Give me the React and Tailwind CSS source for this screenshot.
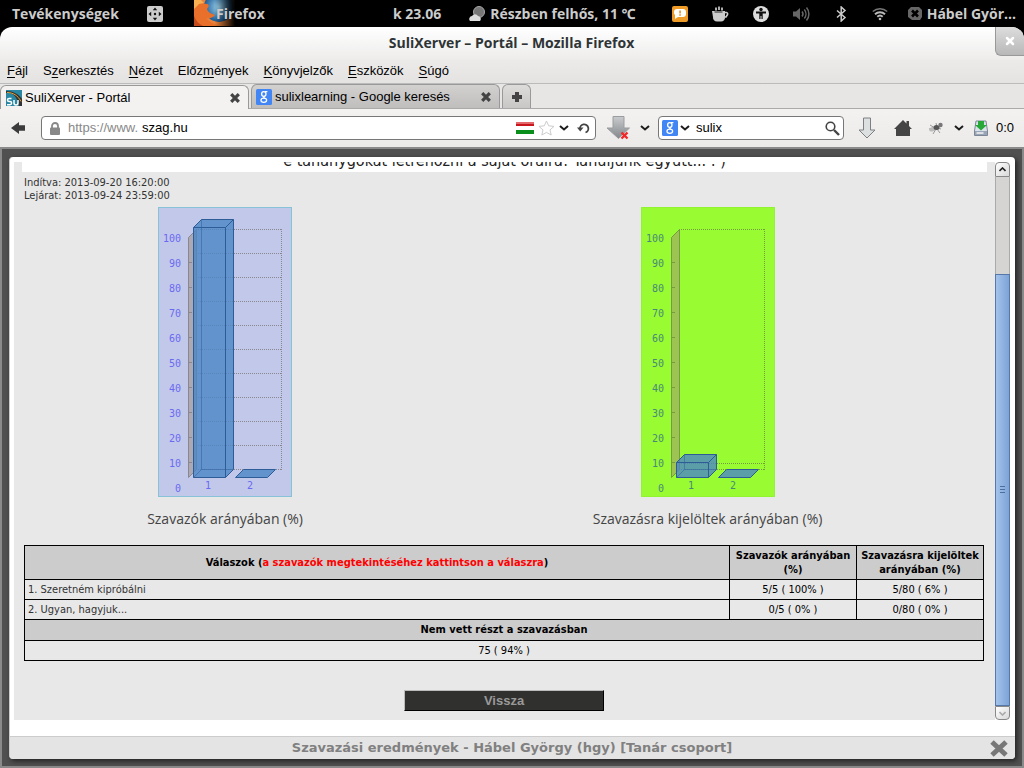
import { X } from "lucide-react"

const menus = [
  ["", "F", "ájl"],
  ["S", "z", "erkesztés"],
  ["", "N", "ézet"],
  ["Előz", "m", "ények"],
  ["", "K", "önyvjelzők"],
  ["", "E", "szközök"],
  ["", "S", "úgó"],
]

const answers = [
  { label: "1. Szeretném kipróbálni", voters: "5/5 ( 100% )", invited: "5/80 ( 6% )" },
  { label: "2. Ugyan, hagyjuk...", voters: "0/5 ( 0% )", invited: "0/80 ( 0% )" },
]

const ticks = [100, 90, 80, 70, 60, 50, 40, 30, 20, 10, 0]

function Chevron() {
  return (
    <svg width="10" height="6" viewBox="0 0 10 6" fill="none" stroke="#1c1c1c" strokeWidth="2">
      <path d="M1 1l4 3.5L9 1" />
    </svg>
  )
}

function GoogleIcon() {
  return (
    <svg className="shrink-0" width="16" height="16" viewBox="0 0 16 16" fill="none" stroke="#fff">
      <rect width="16" height="16" rx="1.5" fill="#4285f4" stroke="none" />
      <ellipse cx="7.8" cy="5" rx="2.2" ry="2.4" strokeWidth="1.3" />
      <path d="M9 2.6h2.4M8.6 7.2c-1.6.8-1 1.4.2 2" strokeWidth="1.2" />
      <ellipse cx="7.8" cy="11.3" rx="2.8" ry="2.1" strokeWidth="1.3" />
    </svg>
  )
}

function TabClose() {
  return (
    <svg width="10" height="10" viewBox="0 0 10 10" stroke="#444" strokeWidth="3.2">
      <path d="M1.2 1.2l7.6 7.6M8.8 1.2L1.2 8.8" />
    </svg>
  )
}

function TopBar() {
  return (
    <header className="flex h-[27px] shrink-0 items-center bg-black px-3 font-['Open_Sans','Noto_Sans',sans-serif] text-[14px] font-bold whitespace-nowrap text-[#ccc]">
      <button className="w-[135px] text-left">Tevékenységek</button>
      <svg className="mr-[31px] shrink-0" width="16" height="16" viewBox="0 0 16 16">
        <rect width="16" height="16" rx="2" fill="#ccc" />
        <path d="M8 1.5l2.2 2.7H5.8zM8 14.5l2.2-2.7H5.8zM1.5 8l2.7-2.2v4.4zM14.5 8l-2.7-2.2v4.4z" fill="#111" />
        <circle cx="8" cy="8" r="1.2" fill="#111" />
      </svg>
      <button className="flex h-full items-center">
        <svg className="-mr-[19px]" width="41" height="27" viewBox="0 0 41 27">
          <defs>
            <linearGradient id="fade">
              <stop offset="0.5" stopColor="#000" stopOpacity="0" />
              <stop offset="1" stopColor="#000" />
            </linearGradient>
            <radialGradient id="globe">
              <stop offset="0" stopColor="#9ed4ee" />
              <stop offset="1" stopColor="#1b5a96" />
            </radialGradient>
          </defs>
          <rect width="41" height="26" fill="#e9823a" />
          <circle cx="25" cy="7" r="15" fill="url(#globe)" />
          <path d="M0 2c5-3 9 0 10 2 5-1 6 2 3 5 1 4 6 5 8 6-2 3-7 4-9 3 3 4 8 6 13 8H0z" fill="#e8702a" />
          <path d="M0 0h7l3 3-5 1-5 5z" fill="#f9b050" />
          <path d="M0 16c2 5 5 8 9 10H0z" fill="#c44a1c" />
          <rect width="41" height="27" fill="url(#fade)" />
        </svg>
        <span className="relative">Firefox</span>
      </button>
      <button className="mr-7 ml-auto">k 23.06</button>
      <button className="mr-9 flex items-center gap-1">
        <svg width="17" height="16" viewBox="0 0 17 16">
          <circle cx="10" cy="6" r="5.5" fill="#777" stroke="#aaa" />
          <path d="M1 15a3 3 0 0 1 2-5 3.5 3.5 0 0 1 6 0 3 3 0 0 1 2 5z" fill="#ddd" />
        </svg>
        Részben felhős, 11 ℃
      </button>
      <div className="flex items-center gap-6">
        <svg width="16" height="16" viewBox="0 0 16 16">
          <rect width="16" height="16" rx="2" fill="#ef9b28" />
          <path d="M5 3h6a3 3 0 0 1 3 3v2a3 3 0 0 1-3 3H6l-3 2V9a3 3 0 0 1-1-3 3 3 0 0 1 3-3z" fill="#fff" />
          <path d="M7.3 4.5h1.5v3H7.3zM7.3 8.3h1.5v1.4H7.3z" fill="#e08a20" />
        </svg>
        <svg width="17" height="16" viewBox="0 0 17 16" fill="#ccc">
          <path d="M0 5h13v6a4 4 0 0 1-4 4.5H5A4 4 0 0 1 1 11z" />
          <path d="M12 6.5h2.5a1.4 1.4 0 0 1 1 2L14 11h-2" fill="none" stroke="#ccc" strokeWidth="1.6" />
          <path d="M4 4.5V1.5M7 4V.5M10 4.5V1.5" stroke="#ccc" strokeWidth="1.7" />
          <path d="M2.5 6h8" stroke="#222" />
        </svg>
        <svg width="16" height="16" viewBox="0 0 16 16">
          <circle cx="8" cy="8" r="8" fill="#ddd" />
          <circle cx="8" cy="3.5" r="1.7" fill="#111" />
          <path d="M3 5.5h10v2H9.7V13H8.5v-3h-1v3H6.3V7.500H3z" fill="#111" />
        </svg>
        <svg width="17" height="16" viewBox="0 0 17 16" fill="none" stroke="#666" strokeWidth="1.5">
          <path d="M0 5.5h3L7 2v12l-4-3.5H0z" fill="#666" stroke="none" />
          <path d="M9 5.5a4 4 0 0 1 0 5M11.3 3.5a7 7 0 0 1 0 9M13.5 1.5a10 10 0 0 1 0 13" />
        </svg>
        <svg width="14" height="16" viewBox="1 0 14 16" fill="none" stroke="#ccc" strokeWidth="1.5">
          <path d="M4 4.5l8 7L8.200 15V1L12 4.500l-8 7" />
        </svg>
        <svg width="16" height="14" viewBox="0 0 16 14" fill="none" stroke="#bbb" strokeWidth="2">
          <path d="M.8 4.5a11 11 0 0 1 14.400 0" stroke="#777" strokeWidth="1.5" />
          <path d="M3 7.2a7.500 7.500 0 0 1 10 0M5.300 9.700a4 4 0 0 1 5.400 0" />
          <circle cx="8" cy="12" r="1.3" fill="#bbb" stroke="none" />
        </svg>
      </div>
      <button className="-mr-1 ml-5 flex items-center gap-1">
        <svg width="15" height="14" viewBox="0 0 15 14" fill="none">
          <path d="M3 0h8l3 3v7l-2 3H4l-4-3V3z" fill="#666" />
          <path d="M4 3.500l6 6M10 3.500l-6 6" stroke="#000" strokeWidth="2.600" />
        </svg>
        Hábel Györ...
      </button>
    </header>
  )
}

function TitleBar() {
  return (
    <div className="flex h-8 items-start rounded-t-xl bg-linear-to-b from-white to-[#eeedec]">
      <h1 className="ml-7 flex-1 self-center text-center font-['Open_Sans','Noto_Sans',sans-serif] text-[14px] leading-5 font-bold text-[#2e3436]">
        SuliXerver – Portál – Mozilla Firefox
      </h1>
      <button aria-label="Ablak bezárása" className="flex h-[29px] w-[29px] items-center justify-center rounded-tr-xl rounded-bl-md border-b border-l border-[#999] bg-linear-to-b from-[#ddd] to-[#b8b8b8]">
        <X size={12} strokeWidth={5} color="#fff" />
      </button>
    </div>
  )
}

function MenuBar() {
  return (
    <nav className="flex h-6 items-center gap-[15px] bg-linear-to-b from-[#ecebea] to-[#e4e3e2] px-[7px] text-[13px]">
      {menus.map(([before, key, after]) => (
        <button key={before + key + after}>
          {before}
          <span className="underline underline-offset-2">{key}</span>
          {after}
        </button>
      ))}
    </nav>
  )
}

function TabBar() {
  return (
    <div className="flex h-[26px] items-end gap-0.5 border-t border-b border-t-[#bbb] border-b-[#aaa] bg-[#e7e6e4] text-[13px]">
      <div className="-mb-px flex h-6 w-[249px] items-center rounded-t-md border border-b-0 border-[#999] bg-[#f3f2f1] pr-2 pl-[5px]">
        <svg className="mr-[3px]" width="16" height="16" viewBox="0 0 16 16">
          <rect width="16" height="16" fill="#2a87a3" />
          <path d="M0 3c6-1 11 3 13 13h3V9C13 4 7 1 0 1z" fill="#333" />
          <path d="M1 2.500c6 0 11 3 14 9" fill="none" stroke="#e4a238" />
          <path d="M5.500 8.500H3a1.500 1.500 0 0 0 0 3h1a1.600 1.600 0 0 1 0 3.200H1M8 10v3a2 2 0 0 0 4 0v-3" fill="none" stroke="#fff" strokeWidth="1.500" />
        </svg>
        <button className="flex-1 text-left">SuliXerver - Portál</button>
        <button aria-label="Lap bezárása"><TabClose /></button>
      </div>
      <div className="flex h-6 w-[249px] items-center rounded-t-md border border-b-0 border-[#999] bg-linear-to-b from-[#d2d1d0] to-[#bfbebd] pr-2 pl-1">
        <GoogleIcon />
        <button className="ml-[3px] flex-1 text-left">sulixlearning - Google keresés</button>
        <button aria-label="Lap bezárása"><TabClose /></button>
      </div>
      <button aria-label="Új lap" className="flex h-6 w-[29px] items-center justify-center rounded-t-md border border-b-0 border-[#999] bg-linear-to-b from-[#dddcdb] to-[#c8c7c6]">
        <svg width="10" height="10" viewBox="0 0 10 10" stroke="#444" strokeWidth="4">
          <path d="M5 0v10M0 5h10" />
        </svg>
      </button>
    </div>
  )
}

function Toolbar() {
  return (
    <div className="flex h-[38px] items-center bg-linear-to-b from-[#f3f2f1] to-[#ebeae9] pr-2.5 pl-[11px] text-[13px]">
      <button aria-label="Vissza az előző oldalra" className="mr-4">
        <svg width="14" height="12" viewBox="0 0 14 12" fill="#3b3b3b">
          <path d="M0 6l8-6v3.300h6v5.400H8V12z" />
        </svg>
      </button>
      <label className="flex h-6 flex-1 items-center rounded border border-[#777] bg-white pr-[5px] pl-2">
        <svg className="mr-2 shrink-0" width="10" height="13" viewBox="0 0 10 13">
          <path d="M2 6V4a3 3 0 0 1 6 0v2" fill="none" stroke="#888" strokeWidth="1.800" />
          <rect y="5.500" width="10" height="7.500" rx="1" fill="#888" />
        </svg>
        <span className="mr-1 text-[#888]">https://www.</span>
        <input aria-label="Cím" className="min-w-0 flex-1 outline-none" defaultValue="szag.hu" />
        <svg className="mr-1" width="18" height="12" viewBox="0 0 18 12">
          <rect width="18" height="4" fill="#c8161c" />
          <rect width="18" height="2" fill="#e2686c" />
          <rect y="4" width="18" height="4" fill="#fff" />
          <rect y="8" width="18" height="4" fill="#0b8f1c" />
        </svg>
        <svg className="mr-1" width="17" height="16" viewBox="0 0 17 16" fill="#fff" stroke="#ccc" strokeLinejoin="round">
          <path d="M8.500 1l2.200 4.800 5.300.6-4 3.500 1.200 5.100-4.700-2.600L3.800 15 5 9.900 1 6.400l5.300-.6z" />
        </svg>
        <Chevron />
        <svg className="ml-2" width="13" height="12" viewBox="0 0 13 12">
          <path d="M3 7a4.200 4.200 0 1 1 5.500 3.500" fill="none" stroke="#444" strokeWidth="1.800" />
          <path d="M0 5.500h6.500L3.200 9.500z" fill="#444" />
        </svg>
      </label>
      <button aria-label="Letöltés leállítása" className="mr-2.5 ml-2.5">
        <svg width="24" height="24" viewBox="0 0 24 24">
          <defs>
            <linearGradient id="stopped" x2="0" y2="1">
              <stop offset="0" stopColor="#c9cbcd" />
              <stop offset="1" stopColor="#84888b" />
            </linearGradient>
          </defs>
          <path d="M7 0.500h11V12h5.500L12.500 22.500 1 12h6z" fill="url(#stopped)" stroke="#9a9da0" />
          <path d="M15.500 16.500l6 6M21.500 16.500l-6 6" stroke="#f02828" strokeWidth="2.400" />
        </svg>
      </button>
      <Chevron />
      <label className="ml-2 flex h-6 w-[186px] items-center rounded border border-[#777] bg-white pr-[3px] pl-[3px]">
        <GoogleIcon />
        <span className="mr-1.5 ml-0.5"><Chevron /></span>
        <input aria-label="Keresés" className="min-w-0 flex-1 outline-none" defaultValue="sulix" />
        <svg width="15" height="15" viewBox="0 0 15 15" fill="none" stroke="#444">
          <circle cx="5.500" cy="5.500" r="4.300" strokeWidth="1.600" />
          <path d="M9 9l5 5" strokeWidth="2.400" />
        </svg>
      </label>
      <button aria-label="Letöltések" className="mr-[18px] ml-3.5">
        <svg width="18" height="22" viewBox="0 0 18 22">
          <path d="M5.500 1h7v12H17l-8 8-8-8h4.500z" fill="#dde0e1" stroke="#7c8082" />
        </svg>
      </button>
      <button aria-label="Kezdőlap" className="mr-4">
        <svg width="18" height="16" viewBox="0 0 18 16" fill="#454545">
          <path d="M9 0l3.500 3.500V1H15v5l3 3h-2v7H2V9H0z" />
        </svg>
      </button>
      <button aria-label="Hibakereső" className="mr-2.5">
        <svg width="16" height="14" viewBox="0 0 16 14" fill="none" stroke="#999">
          <path d="M2 4l5 3M1 8l6-1M5 13l3-5M12 12l-3-4M13 8L9 7M8 2l1 4" />
          <ellipse cx="5" cy="8" rx="4" ry="2.200" fill="#bbb" stroke="none" transform="rotate(-20 5 8)" />
          <ellipse cx="8.500" cy="6.500" rx="3" ry="2.500" fill="#555" stroke="none" />
          <circle cx="12.500" cy="4" r="2.200" fill="#777" stroke="none" />
        </svg>
      </button>
      <Chevron />
      <svg className="mr-2 ml-2.5" width="14" height="16" viewBox="0 0 14 16">
        <path d="M2 1h10l1.500 10v4.500h-13V11z" fill="#dbe2ec" stroke="#7d8694" />
        <path d="M1 11h12v4H1z" fill="#9aa5b8" />
        <path d="M2.500 13h7" stroke="#f5f5f5" strokeWidth="1.500" />
        <path d="M4 1h6v4h3l-6 5.500L1 5h3z" fill="#28a838" />
      </svg>
      <span>0:0</span>
    </div>
  )
}

// 3D bar chart, heights are in px above the floor
function VoteChart({ title, background, border, wall, ink, text, fill, stroke, gridLines, barHeight }) {
  const top = 270.5 - barHeight
  return (
    <figure className="flex flex-col items-center">
      <svg
        role="img"
        aria-label={title}
        width="134"
        height="290"
        viewBox="0 0 134 290"
        fontFamily="'DejaVu Sans Mono', monospace"
        fontSize="10"
      >
        <rect x="0.500" y="0.500" width="133" height="289" fill={background} stroke={border} />
        <g stroke={ink} strokeDasharray="1 1" fill="none">
          {gridLines.map((y) => (
            <path key={y} d={`M38 ${y}H124`} />
          ))}
          <path d="M123.500 22V263" />
        </g>
        <path d="M30.500 30.500l8-8v240l-8 8z" fill={wall} stroke={ink} />
        {ticks.map((tick, i) => (
          <g key={tick}>
            {i > 0 && i < 10 && <path d={`M31 ${30.5 + i * 25}h3`} stroke={ink} />}
            <text x="23" y={34.5 + i * 25} textAnchor="end" fill={text}>{tick}</text>
          </g>
        ))}
        <g fill={fill} stroke={stroke}>
          <path d={`M35.500 ${top}l8-8h32V262.500l-8 8h-32z`} />
          <path
            d={`M35.500 ${top}h32l8-8M67.500 ${top}V270.500`}
            fill="none"
          />
          <path
            d={`M43.500 ${top - 8}V262.500h32M43.500 262.500l-8 8`}
            fill="none"
            opacity="0.500"
          />
          <path d="M77.500 270.500l8-8h32l-8 8z" />
        </g>
        <text x="50" y="282" textAnchor="middle" fill={text}>1</text>
        <text x="92" y="282" textAnchor="middle" fill={text}>2</text>
      </svg>
      <figcaption className="mt-3 font-['Open_Sans','Noto_Sans',sans-serif] text-[14px] leading-5 text-[#444]">{title}</figcaption>
    </figure>
  )
}

function ResultTable() {
  const cell = "border border-black px-[3px] text-center"
  return (
    <table className="mt-4 w-full border-collapse text-[11px] leading-[14px] text-black">
      <thead>
        <tr className="h-[34px] bg-[#ccc]">
          <th className={cell}>
            Válaszok (<span className="text-[#f00]">a szavazók megtekintéséhez kattintson a válaszra</span>)
          </th>
          <th className="w-[127px] border border-black text-center">Szavazók arányában (%)</th>
          <th className="w-[127px] border border-black text-center">Szavazásra kijelöltek arányában (%)</th>
        </tr>
      </thead>
      <tbody>
        {answers.map((answer) => (
          <tr key={answer.label} className="h-5">
            <td className="border border-black px-[3px]">
              <a href="#szavazok" className="text-[#333]">{answer.label}</a>
            </td>
            <td className={cell}>{answer.voters}</td>
            <td className={cell}>{answer.invited}</td>
          </tr>
        ))}
        <tr className="h-[21px] bg-[#ccc]">
          <th colSpan={3} className={cell}>Nem vett részt a szavazásban</th>
        </tr>
        <tr className="h-5">
          <td colSpan={3} className={cell}>75 ( 94% )</td>
        </tr>
      </tbody>
    </table>
  )
}

function ScrollBar() {
  return (
    <div className="flex w-[15px] shrink-0 flex-col">
      <button aria-label="Fel" className="flex h-[15px] items-center justify-center rounded-t border border-[#888] bg-linear-to-br from-white to-[#d8d8d8]">
        <svg width="7" height="5" viewBox="0 0 7 5" fill="none" stroke="#222" strokeWidth="1.600">
          <path d="M.5 4l3-3 3 3" />
        </svg>
      </button>
      <div className="flex-[97] border-x border-[#aaa] bg-[#d5d4d2]" />
      <div className="flex flex-[432] items-center justify-center border border-[#5578a8] bg-linear-to-r from-[#a3c3ec] to-[#7ea3d6]">
        <svg width="5" height="7" viewBox="0 0 5 7" stroke="#4b6ea0">
          <path d="M0 .5h5M0 3.500h5M0 6.500h5" />
        </svg>
      </div>
      <button aria-label="Le" className="flex h-[14px] items-center justify-center rounded-b border border-[#888] bg-linear-to-br from-white to-[#d8d8d8]">
        <svg width="7" height="5" viewBox="0 0 7 5" fill="none" stroke="#aaa" strokeWidth="1.600">
          <path d="M.5 1l3 3 3-3" />
        </svg>
      </button>
    </div>
  )
}

function ResultDialog() {
  return (
    <div className="flex min-h-0 flex-1 flex-col rounded-sm border-l border-[#ccc] bg-white shadow-[2px_2px_5px_#222]">
      <div className="mt-[5px] mb-4 flex min-h-0 flex-1 pr-[5px] pl-1">
        <div className="flex min-h-0 flex-1 flex-col justify-end overflow-hidden bg-[#e8e8e8] pb-[9px] font-['DejaVu_Sans_Condensed','DejaVu_Sans',sans-serif]">
          <p className="mx-2 shrink-0 bg-white pb-px text-center text-[16px] leading-5 text-[#222]">
            e tananygokat létrehozni a saját óráira! Tanuljunk együtt... : )
          </p>
          <div className="shrink-0 pr-[11px] pl-2.5">
            <p className="mt-1 mb-[5px] text-[11px] leading-[13px] text-[#333]">
              Indítva: 2013-09-20 16:20:00
              <br />
              Lejárat: 2013-09-24 23:59:00
            </p>
            <div className="-mr-[5px] grid grid-cols-[5fr_7fr]">
              <VoteChart
                title="Szavazók arányában (%)"
                background="#c2c8ea"
                border="#86c3d6"
                wall="#aca8b4"
                ink="#8a8790"
                text="#6a6af0"
                fill="#4b86c4cc"
                stroke="#2d5c96"
                gridLines={[22.5, 46.5, 70.5, 94.5, 118.5, 142.5, 166.5, 190.5, 214.5, 238.5, 262.5]}
                barHeight={250}
              />
              <VoteChart
                title="Szavazásra kijelöltek arányában (%)"
                background="#99fc32"
                border="#90f530"
                wall="#9dc453"
                ink="#769c43"
                text="#498879"
                fill="#4b86c4cc"
                stroke="#2d5c96"
                gridLines={[22.5, 256.5, 262.5]}
                barHeight={15}
              />
            </div>
            <ResultTable />
            <div className="mt-[29px] flex justify-center">
              <button className="h-[21px] w-[200px] border border-t-[#bbb] border-r-black border-b-black border-l-[#bbb] bg-[#30302e] font-['Liberation_Sans',sans-serif] text-[13px] leading-4 font-bold text-[#999]">
                Vissza
              </button>
            </div>
          </div>
        </div>
        <ScrollBar />
      </div>
      <div className="flex h-[23px] items-center rounded-b-sm border-t border-[#ccc] bg-[#e4e4e4] pr-[7px] pl-6">
        <h2 className="flex-1 text-center font-['DejaVu_Sans',sans-serif] text-[13px] font-bold text-[#808080]">
          Szavazási eredmények - Hábel György (hgy) [Tanár csoport]
        </h2>
        <button aria-label="Bezárás">
          <svg width="18" height="17" viewBox="0 0 18 17" stroke="#777" strokeWidth="5">
            <path d="M2 2l14 13M16 2L2 15" />
          </svg>
        </button>
      </div>
    </div>
  )
}

export default function App() {
  return (
    <div className="flex h-screen flex-col overflow-hidden bg-black font-['Liberation_Sans',sans-serif] text-black">
      <TopBar />
      <TitleBar />
      <MenuBar />
      <TabBar />
      <Toolbar />
      <main className="flex min-h-0 flex-1 flex-col border-x-2 border-t-2 border-b-2 border-[#8a8a8a] bg-[#505050] px-[7px] pt-2 pb-[7px]">
        <ResultDialog />
      </main>
    </div>
  )
}
